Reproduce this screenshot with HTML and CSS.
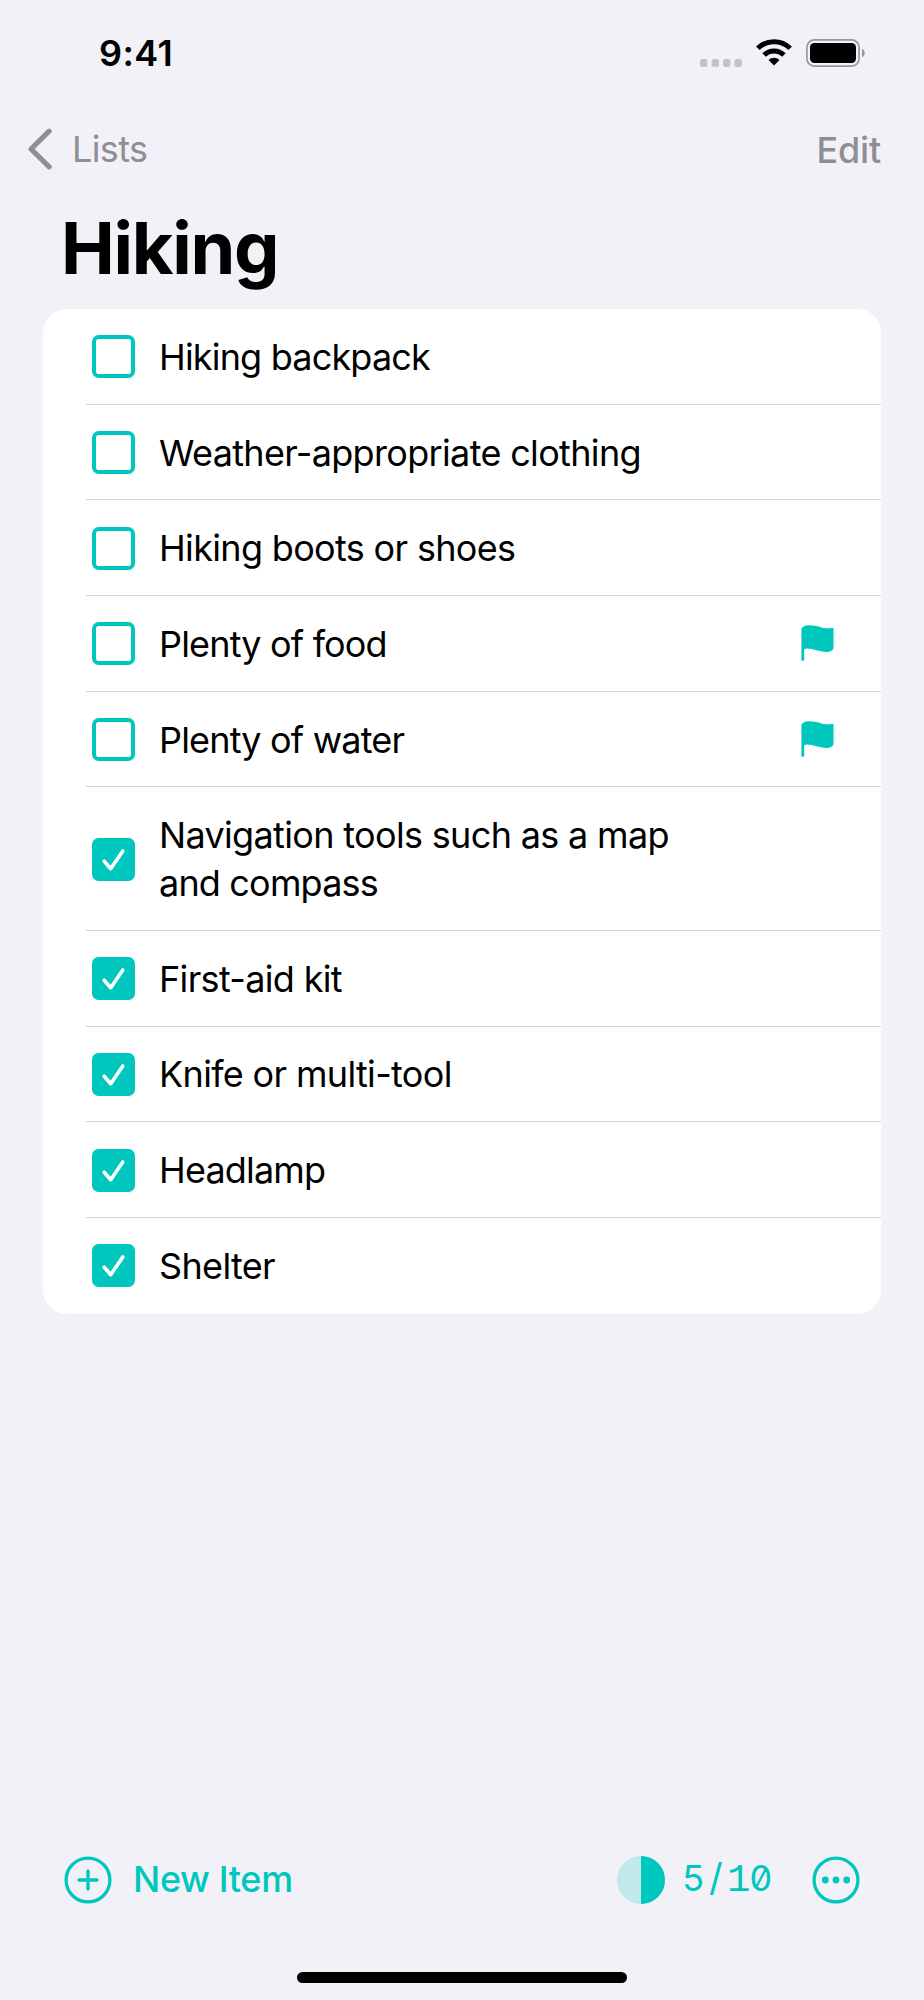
FILE: index.html
```html
<!DOCTYPE html>
<html lang="en">
<head>
<meta charset="utf-8">
<title>Hiking</title>
<link rel="stylesheet" href="styles.css">
</head>
<body>
<svg width="0" height="0" class="defs">
  <symbol id="box" viewBox="0 0 43 43"><rect x="2" y="2" width="39" height="39" rx="4.8" fill="none" stroke="currentColor" stroke-width="4"/></symbol>
  <symbol id="checked" viewBox="0 0 43 43"><rect width="43" height="43" rx="6.5" fill="currentColor"/><path d="M12.2 23.2 18.7 30.7 30.8 12.9" fill="none" stroke="#fff" stroke-width="3.6" stroke-linecap="round" stroke-linejoin="round"/></symbol>
  <symbol id="flag" viewBox="0 0 33 37"><path d="M.4 5.2C.4 2.2 3.6.3 8.2.3c8.300 0 12.600 3.200 18.800 3.200 1.900 0 3.200-.4 4.200-.4.900 0 1.300.5 1.300 1.400v17.700c0 3.200-2.700 4.700-7 4.700-7.300 0-13.500-3.300-19-3.300-1.300 0-2.300.2-3.300.6v10.200c0 .9-.6 1.500-1.400 1.500S.4 35.300.4 34.400z" fill="currentColor"/></symbol>
</svg>
<div class="screen">
  <header class="status">
    <span class="time">9:41</span>
    <div class="indicators">
      <svg class="dots" width="42" height="8" viewBox="0 0 42 8" fill="#c3c2c8"><rect width="7.400" height="8" rx="2.300"/><rect x="11.600" width="7.400" height="8" rx="2.300"/><rect x="23" width="7.400" height="8" rx="2.300"/><rect x="34.500" width="7.400" height="8" rx="2.300"/></svg>
      <svg class="wifi" width="36" height="27" viewBox="0 0 36 27"><g fill="none" stroke="#000" stroke-width="5"><path d="M1.800 9.300a23 23 0 0 1 32.400 0"/><path d="M8.100 16a14 14 0 0 1 19.800 0"/></g><path d="M18 26.600 12.500 20.900a8 8 0 0 1 11 0z"/></svg>
      <svg class="battery" width="59" height="28" viewBox="0 0 59 28"><rect x=".9" y=".9" width="52.200" height="26.200" rx="7.400" fill="none" stroke="#98979c" stroke-width="1.700"/><rect x="4" y="4" width="46" height="20" rx="4.500"/><path d="M56 9.700c3.600 1.500 3.600 7.100 0 8.600z" fill="#98979c"/></svg>
    </div>
  </header>
  <nav class="nav">
    <a class="back"><svg width="24" height="42" viewBox="0 0 24 42"><path d="M21.200 3.200 3 21l18.200 17.800" fill="none" stroke="currentColor" stroke-width="5.200" stroke-linecap="round" stroke-linejoin="round"/></svg><span class="lists">Lists</span></a>
    <a class="edit">Edit</a>
  </nav>
  <h1 class="title">Hiking</h1>
  <ul class="card">
    <li class="row"><svg class="check"><use href="#box"/></svg><div class="cell"><span class="label">Hiking backpack</span></div></li>
    <li class="row"><svg class="check"><use href="#box"/></svg><div class="cell"><span class="label wide">Weather-appropriate clothing</span></div></li>
    <li class="row"><svg class="check"><use href="#box"/></svg><div class="cell"><span class="label wide">Hiking boots or shoes</span></div></li>
    <li class="row"><svg class="check"><use href="#box"/></svg><div class="cell"><span class="label">Plenty of food</span><svg class="flag"><use href="#flag"/></svg></div></li>
    <li class="row"><svg class="check"><use href="#box"/></svg><div class="cell"><span class="label">Plenty of water</span><svg class="flag"><use href="#flag"/></svg></div></li>
    <li class="row tall"><svg class="check"><use href="#checked"/></svg><div class="cell"><span class="label"><span class="wide">Navigation tools such as a map</span><br>and compass</span></div></li>
    <li class="row"><svg class="check"><use href="#checked"/></svg><div class="cell"><span class="label wide">First-aid kit</span></div></li>
    <li class="row"><svg class="check"><use href="#checked"/></svg><div class="cell"><span class="label wide">Knife or multi-tool</span></div></li>
    <li class="row"><svg class="check"><use href="#checked"/></svg><div class="cell"><span class="label">Headlamp</span></div></li>
    <li class="row"><svg class="check"><use href="#checked"/></svg><div class="cell"><span class="label wide">Shelter</span></div></li>
  </ul>
  <footer class="toolbar">
    <svg width="48" height="48" viewBox="0 0 48 48" fill="none" stroke="currentColor" stroke-width="3.300" stroke-linecap="round"><circle cx="24" cy="24" r="21.900"/><path d="M24 15v18M15 24h18"/></svg>
    <span class="new">New Item</span>
    <svg class="pie" width="48" height="48" viewBox="0 0 48 48" fill="currentColor"><circle cx="24" cy="24" r="24" opacity=".2"/><path d="M24 0a24 24 0 0 1 0 48z"/></svg>
    <span class="count"><span>5</span><span class="slash">/</span><span class="one">1</span><span>0</span></span>
    <svg class="more" width="48" height="48" viewBox="0 0 48 48" fill="currentColor"><circle cx="24" cy="24" r="21.900" fill="none" stroke="currentColor" stroke-width="3.300"/><circle cx="13.300" cy="24" r="3.400"/><circle cx="24" cy="24" r="3.400"/><circle cx="34.700" cy="24" r="3.400"/></svg>
  </footer>
  <div class="home"></div>
</div>
</body>
</html>
```
FILE: styles.css
```css
* { box-sizing: border-box; }
body { margin: 0; background: #f2f1f7; color: #000; font: 36px/47.8px Inter, "Liberation Sans", sans-serif; }
svg { display: block; flex: none; }
.defs { position: absolute; }
.screen { width: 924px; height: 2000px; display: flex; flex-direction: column; overflow: hidden; }
.status { height: 106px; padding: 0 59px 0 99px; display: flex; justify-content: space-between; align-items: center; }
.time { font-weight: 600; letter-spacing: 0.4px; padding-top: 1px; }
.indicators { display: flex; align-items: center; margin-top: -1px; }
.dots { margin-top: 20px; margin-right: 14px; }
.wifi { margin-right: 14px; }
.nav { height: 86px; padding: 0 43px 0 28px; display: flex; justify-content: space-between; align-items: center; color: #8f8e94; }
.back { display: flex; align-items: center; gap: 20px; }
.lists { letter-spacing: -0.6px; padding-top: 1px; }
.edit { font-weight: 500; padding-top: 3px; letter-spacing: -0.2px; }
.title { margin: 0; height: 117px; padding: 13px 0 0 61px; font-size: 72px; line-height: 86px; font-weight: 700; letter-spacing: -1.3px; }
.card { list-style: none; margin: 0 43px; padding: 0; background: #fff; border-radius: 24px; overflow: hidden; flex: none; }
.row { height: 95.7px; margin-left: 43px; padding-left: 6px; display: flex; align-items: center; gap: 24px; background: linear-gradient(#d5d5d8, #d5d5d8) bottom / 100% 1px no-repeat; }
.row:last-child { background: none; }
.tall { height: 143.4px; }
.check { width: 43px; height: 43px; color: #00c7be; }
.cell { flex: 1; display: flex; justify-content: space-between; align-items: center; padding-right: 47px; }
.label { letter-spacing: -0.82px; white-space: nowrap; padding-top: 2px; }
.wide { letter-spacing: -0.66px; }
.flag { width: 33px; height: 37px; color: #00c7be; }
.toolbar { margin-top: auto; height: 48px; padding: 0 64px; display: flex; align-items: center; color: #00c7be; flex: none; }
.new { font-weight: 500; margin-left: 21px; letter-spacing: -0.35px; }
.pie { margin-left: auto; }
.count { width: 92px; margin-left: 17px; display: grid; grid-template-columns: repeat(4, 22.5px); align-items: baseline; text-align: center; font-feature-settings: "zero"; }
.count .one { font-family: "Liberation Mono", monospace; font-size: 39px; }
.count .slash { font-size: 38px; }
.more { margin-left: 38px; }
.home { width: 330px; height: 11px; margin: 68px auto 17px; border-radius: 6px; background: #000; flex: none; }
```
